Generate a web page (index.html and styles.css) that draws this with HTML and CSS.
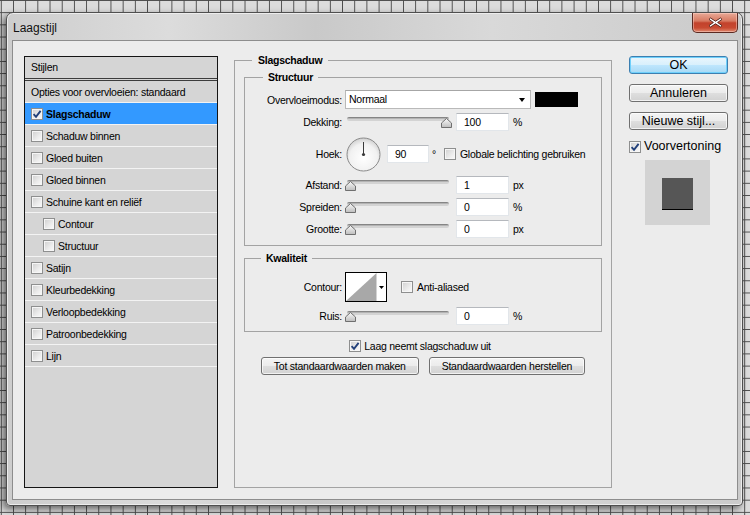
FILE: index.html
```html
<!DOCTYPE html>
<html lang="nl">
<head>
<meta charset="utf-8">
<title>Laagstijl</title>
<link rel="stylesheet" href="styles.css">
</head>
<body>
<svg class="defs" width="0" height="0" aria-hidden="true">
  <defs>
    <linearGradient id="thumbg" x1="0" y1="0" x2="0" y2="1">
      <stop offset="0" stop-color="#fafafa"/>
      <stop offset="1" stop-color="#bdbdbd"/>
    </linearGradient>
    <radialGradient id="dialg" cx="0.5" cy="0.6" r="0.6">
      <stop offset="0" stop-color="#ffffff"/>
      <stop offset="0.7" stop-color="#f1f1f1"/>
      <stop offset="1" stop-color="#cfcfcf"/>
    </radialGradient>
    <g id="thumb"><path d="M5.5 0.5 L10.5 5 V9.5 H0.5 V5 Z" fill="url(#thumbg)" stroke="#6f6f6f"/></g>
    <g id="tick"><path d="M1.6 5.2 L4 7.8 L8.6 1.8" fill="none" stroke="#22407a" stroke-width="1.9"/></g>
  </defs>
</svg>

<div class="window">
  <div class="titlebar">
    <span class="title">Laagstijl</span>
    <div class="close">
      <svg width="15" height="11" viewBox="0 0 15 11"><path d="M2.5 1 L7.5 4.2 L12.5 1 L14 2.4 L9.6 5.5 L14 8.6 L12.5 10 L7.5 6.8 L2.5 10 L1 8.6 L5.4 5.5 L1 2.4 Z" fill="#ffffff" stroke="#4a1e16" stroke-width="0.9" stroke-linejoin="round"/></svg>
    </div>
  </div>

  <div class="client">
    <div class="styles">
      <div class="shead">Stijlen</div>
      <div class="srow">Opties voor overvloeien: standaard</div>
      <div class="srow sel"><span class="cb"><svg width="10" height="10" viewBox="0 0 10 10"><use href="#tick"/></svg></span>Slagschaduw</div>
      <div class="srow"><span class="cb"></span>Schaduw binnen</div>
      <div class="srow"><span class="cb"></span>Gloed buiten</div>
      <div class="srow"><span class="cb"></span>Gloed binnen</div>
      <div class="srow"><span class="cb"></span>Schuine kant en reliëf</div>
      <div class="srow sub"><span class="cb"></span>Contour</div>
      <div class="srow sub"><span class="cb"></span>Structuur</div>
      <div class="srow"><span class="cb"></span>Satijn</div>
      <div class="srow"><span class="cb"></span>Kleurbedekking</div>
      <div class="srow"><span class="cb"></span>Verloopbedekking</div>
      <div class="srow"><span class="cb"></span>Patroonbedekking</div>
      <div class="srow"><span class="cb"></span>Lijn</div>
    </div>

    <fieldset class="main">
      <legend>Slagschaduw</legend>

      <fieldset class="group structuur">
        <legend>Structuur</legend>
        <div class="frow r-mode">
          <span class="lbl">Overvloeimodus:</span>
          <div class="select">Normaal<span class="arrow"></span></div>
          <div class="swatch"></div>
        </div>
        <div class="frow r-opac">
          <span class="lbl">Dekking:</span>
          <div class="slider"><div class="track"></div><svg class="thumb max" width="11" height="10" viewBox="0 0 11 10"><use href="#thumb"/></svg></div>
          <div class="field">100</div>
          <span class="unit">%</span>
        </div>
        <div class="frow r-angle">
          <span class="lbl">Hoek:</span>
          <svg class="dial" width="35" height="35" viewBox="0 0 35 35">
            <circle cx="17.5" cy="17.5" r="16.5" fill="url(#dialg)" stroke="#8a8a8a"/>
            <line x1="17.5" y1="17.5" x2="17.5" y2="5" stroke="#3a3a3a" stroke-width="1"/>
            <circle cx="17.5" cy="17.5" r="1.6" fill="#3a3a3a"/>
          </svg>
          <div class="field small">90</div>
          <span class="deg">°</span>
          <span class="cb"></span>
          <span class="cbl">Globale belichting gebruiken</span>
        </div>
        <div class="frow r-dist">
          <span class="lbl">Afstand:</span>
          <div class="slider"><div class="track"></div><svg class="thumb" width="11" height="10" viewBox="0 0 11 10"><use href="#thumb"/></svg></div>
          <div class="field">1</div>
          <span class="unit">px</span>
        </div>
        <div class="frow r-spread">
          <span class="lbl">Spreiden:</span>
          <div class="slider"><div class="track"></div><svg class="thumb" width="11" height="10" viewBox="0 0 11 10"><use href="#thumb"/></svg></div>
          <div class="field">0</div>
          <span class="unit">%</span>
        </div>
        <div class="frow r-size">
          <span class="lbl">Grootte:</span>
          <div class="slider"><div class="track"></div><svg class="thumb" width="11" height="10" viewBox="0 0 11 10"><use href="#thumb"/></svg></div>
          <div class="field">0</div>
          <span class="unit">px</span>
        </div>
      </fieldset>

      <fieldset class="group kwaliteit">
        <legend>Kwaliteit</legend>
        <div class="frow r-contour">
          <span class="lbl">Contour:</span>
          <div class="contour">
            <svg width="40" height="28" viewBox="0 0 40 28">
              <rect width="40" height="28" fill="#ffffff"/>
              <path d="M0 28 L30.5 0 V28 Z" fill="#a8a8a8"/>
              <path d="M33 13 H38 L35.5 16 Z" fill="#000000"/>
            </svg>
          </div>
          <span class="cb"></span>
          <span class="cbl">Anti-aliased</span>
        </div>
        <div class="frow r-noise">
          <span class="lbl">Ruis:</span>
          <div class="slider"><div class="track"></div><svg class="thumb" width="11" height="10" viewBox="0 0 11 10"><use href="#thumb"/></svg></div>
          <div class="field">0</div>
          <span class="unit">%</span>
        </div>
      </fieldset>

      <div class="knock">
        <span class="cb"><svg width="10" height="10" viewBox="0 0 10 10"><use href="#tick"/></svg></span>
        <span class="cbl">Laag neemt slagschaduw uit</span>
      </div>
      <div class="defaults">
        <div class="btn">Tot standaardwaarden maken</div>
        <div class="btn">Standaardwaarden herstellen</div>
      </div>
    </fieldset>

    <div class="side">
      <div class="btn big ok">OK</div>
      <div class="btn big">Annuleren</div>
      <div class="btn big">Nieuwe stijl...</div>
      <div class="preview-toggle">
        <span class="cb"><svg width="10" height="10" viewBox="0 0 10 10"><use href="#tick"/></svg></span>
        <span>Voorvertoning</span>
      </div>
      <div class="preview"><div class="square"></div></div>
    </div>
  </div>
</div>
</body>
</html>
```

FILE: styles.css
```css
* { box-sizing: border-box; }

html, body { margin: 0; padding: 0; }

body {
  width: 750px;
  height: 515px;
  overflow: hidden;
  background-color: #dcdcdc;
  background-image:
    linear-gradient(to right, #4c4c4c 1px, transparent 1px),
    linear-gradient(to bottom, #4c4c4c 1px, transparent 1px);
  background-size: 12.2px 12.2px;
  background-position: 0.8px 0;
  font-family: "Liberation Sans", Arial, sans-serif;
  font-size: 10.5px;
  letter-spacing: -0.25px;
  color: #000;
}

.defs { position: absolute; width: 0; height: 0; overflow: hidden; }

/* ---------- window frame ---------- */
.window {
  margin: 12px 0 0 6px;
  width: 737px;
  height: 494px;
  border: 1px solid #4f4f4f;
  border-radius: 7px 7px 4px 4px;
  background: linear-gradient(to right, #cdcdcd 0%, #dcdcdc 22%, #c9c9c9 42%, #d9d9d9 66%, #cacaca 100%);
  box-shadow: inset 0 0 0 1px #ededed, -3px 3px 7px rgba(0, 0, 0, 0.55);
  display: flex;
  flex-direction: column;
}

.titlebar {
  height: 27px;
  display: flex;
  justify-content: space-between;
  align-items: flex-start;
}

.title {
  padding: 8px 0 0 6px;
  font-size: 12px;
  letter-spacing: 0;
  line-height: 14px;
  color: #111;
}

.close {
  width: 46px;
  height: 20px;
  margin-right: 4px;
  border: 1px solid #5b2a22;
  border-top: none;
  border-radius: 0 0 5px 5px;
  background: linear-gradient(to bottom, #e8a996 0%, #d77a62 42%, #c2422c 52%, #c84a31 78%, #e08a70 100%);
  box-shadow: inset 0 0 0 1px rgba(255, 220, 210, 0.45);
  display: flex;
  align-items: center;
  justify-content: center;
}

.client {
  flex: 1;
  margin: 0 4px 5px 5px;
  border: 1px solid #8d8d8d;
  background: #ececec;
  display: flex;
  align-items: flex-start;
  padding: 15px 0 0 11px;
}

/* ---------- styles list ---------- */
.styles {
  width: 194px;
  height: 432px;
  border: 1px solid #151515;
  background: #d5d5d5;
  flex: none;
}

.shead {
  height: 24px;
  border-bottom: 3px double #3c3c3c;
  padding-left: 6px;
  line-height: 20px;
}

.srow {
  height: 22px;
  border-bottom: 1px solid #f3f3f3;
  padding-left: 6px;
  display: flex;
  align-items: center;
  gap: 3px;
}

.srow.sub { padding-left: 18px; }

.srow.sel {
  background: #3399ff;
  font-weight: bold;
}

/* ---------- checkbox ---------- */
.cb {
  width: 12px;
  height: 12px;
  flex: none;
  border: 1px solid #8e8f8f;
  background: linear-gradient(135deg, #cfcfcf 0%, #ececec 60%, #fbfbfb 100%);
  box-shadow: inset 0 0 0 1px #f6f6f6;
  display: flex;
  align-items: center;
  justify-content: center;
}

.cb svg { display: block; }

/* ---------- main group ---------- */
fieldset { margin: 0; min-width: 0; }

legend {
  font-weight: bold;
  line-height: 12px;
  padding: 0 6px;
}

.main {
  flex: none;
  margin: -2px 0 0 16px;
  width: 378px;
  height: 434px;
  border: 1px solid #a3a3a3;
  padding: 0 9px 0 9px;
}

.main > legend { margin-left: 8px; }

.group {
  border: 1px solid #a3a3a3;
  padding: 0;
}

.group > legend { padding: 0 5px; }

.structuur {
  margin-top: 5px;
  padding: 7px 0 7px 0;
}
.structuur > legend { margin-left: 18px; }

.kwaliteit {
  margin-top: 6px;
  padding: 8px 0 6px 0;
}
.kwaliteit > legend { margin-left: 16px; }

.frow {
  display: flex;
  align-items: center;
  height: 18px;
}

.lbl {
  width: 97px;
  flex: none;
  text-align: right;
}

.r-mode { height: 19px; }
.r-opac { margin-top: 4px; }
.r-angle { margin-top: 6px; height: 34px; }
.r-dist { margin-top: 5px; }
.r-spread { margin-top: 4px; }
.r-size { margin-top: 4px; }
.r-contour { height: 30px; }
.r-noise { margin-top: 5px; }

.select {
  position: relative;
  margin-left: 3px;
  width: 186px;
  height: 19px;
  border: 1px solid #b9b9b9;
  border-top-color: #a6a6a6;
  background: #fff;
  padding-left: 3px;
  line-height: 17px;
}

.arrow {
  position: absolute;
  right: 5px;
  top: 7px;
  width: 0;
  height: 0;
  border-top: 4px solid #000;
  border-left: 3.5px solid transparent;
  border-right: 3.5px solid transparent;
}

.swatch {
  margin-left: 4px;
  width: 43px;
  height: 15px;
  background: #000;
}

.slider {
  position: relative;
  margin-left: 3px;
  width: 104px;
  height: 18px;
  flex: none;
}

.track {
  position: absolute;
  left: 2px;
  right: 0;
  top: 4px;
  height: 4px;
  border-radius: 2px;
  background: linear-gradient(to bottom, #858585 0, #858585 1px, #b3b3b3 1px, #b3b3b3 2px, #d3d3d3 2px);
}

.thumb {
  position: absolute;
  left: 0;
  top: 5px;
  display: block;
}

.thumb.max { left: 96px; }

.field {
  margin-left: 7px;
  width: 53px;
  height: 18px;
  flex: none;
  background: #fff;
  border: 1px solid #e2e6ea;
  border-top-color: #b5b8bd;
  padding-left: 7px;
  line-height: 16px;
}

.field.small {
  margin-left: 6px;
  width: 42px;
}

.unit { margin-left: 4px; }

.dial {
  display: block;
  margin-left: 4px;
  flex: none;
}

.deg { margin-left: 3px; }

.r-angle .cb { margin-left: 8px; }
.cbl { margin-left: 4px; }

.contour {
  margin-left: 3px;
  width: 42px;
  height: 30px;
  border: 1px solid #000;
  flex: none;
}
.contour svg { display: block; }

.r-contour .cb { margin-left: 14px; }

.knock {
  margin-top: 8px;
  height: 12px;
  display: flex;
  align-items: center;
  justify-content: center;
  padding-right: 6px;
}
.knock .cbl { margin-left: 3px; }

.defaults {
  margin-top: 5px;
  display: flex;
  justify-content: center;
  gap: 10px;
}

/* ---------- buttons ---------- */
.btn {
  height: 18px;
  border: 1px solid #707070;
  border-radius: 3px;
  background: linear-gradient(to bottom, #f4f4f4 0%, #ececec 48%, #dedede 52%, #d2d2d2 100%);
  box-shadow: inset 0 0 0 1px rgba(255, 255, 255, 0.7);
  padding: 0 12px;
  line-height: 16px;
  text-align: center;
}

.side {
  flex: none;
  margin-left: 17px;
  width: 99px;
  display: flex;
  flex-direction: column;
}

.btn.big {
  font-size: 12.5px;
  letter-spacing: 0;
  margin-bottom: 10px;
  padding: 0;
}

.btn.ok {
  border-color: #3c7fb1;
  background: linear-gradient(to bottom, #eaf6fd 0%, #d9f0fc 48%, #bee6fd 52%, #a7d9f5 100%);
  box-shadow: inset 0 0 0 1px #6fd0fb;
}

.preview-toggle {
  margin-top: 0;
  height: 13px;
  display: flex;
  align-items: center;
  gap: 3px;
  font-size: 12.5px;
  line-height: 13px;
  letter-spacing: 0;
}

.preview {
  margin: 7px 0 0 16px;
  width: 65px;
  height: 65px;
  background: #d3d3d3;
  padding: 18px 0 0 17px;
}

.square {
  width: 31px;
  height: 31px;
  background: #565656;
  box-shadow: 0 1px 0 #000;
}
```
